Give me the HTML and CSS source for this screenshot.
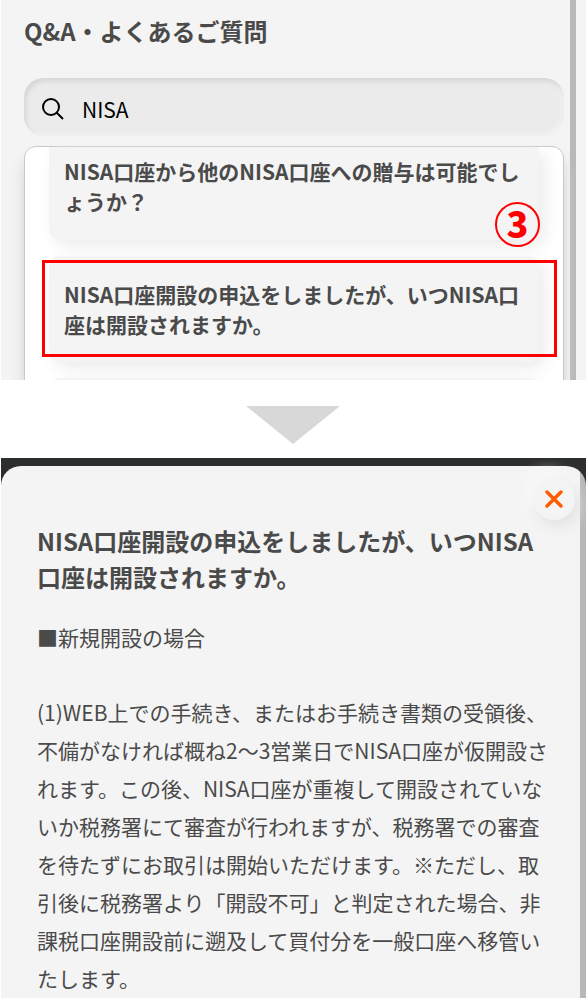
FILE: index.html
```html
<!DOCTYPE html>
<html lang="ja">
<head>
  <meta charset="utf-8">
  <title>Q&amp;A・よくあるご質問</title>
  <link rel="stylesheet" href="styles.css">
</head>
<body>
  <section class="search-screen">
    <div class="search-body">
      <h1>Q&amp;A・よくあるご質問</h1>
      <form class="search-box">
        <label for="keyword" aria-label="検索">
          <svg width="22" height="22" viewBox="0 0 22 22" fill="none" stroke="#000" stroke-width="2">
            <circle cx="9" cy="9" r="8"/>
            <path d="M14.5 14.5L21 21"/>
          </svg>
        </label>
        <input type="text" id="keyword" value="NISA">
      </form>
      <div class="results">
        <a class="result first" href="#">NISA口座から他のNISA口座への贈与は可能でしょうか？</a>
        <a class="result" href="#answer">NISA口座開設の申込をしましたが、いつNISA口座は開設されますか。</a>
        <div class="result"></div>
        <div class="highlight"></div>
        <span class="step">3</span>
      </div>
    </div>
    <div class="scrollbar"></div>
  </section>

  <svg class="arrow" width="94" height="38" viewBox="0 0 94 38">
    <path d="M0 0H94L47 38Z" fill="#d8d8d8"/>
  </svg>

  <section class="modal-screen">
    <article class="modal" id="answer">
      <button class="close" type="button" aria-label="閉じる">
        <svg width="18" height="18" viewBox="0 0 18 18" fill="none" stroke="#ff5a00" stroke-width="3.4" stroke-linecap="round">
          <path d="M2 2L16 16M16 2L2 16"/>
        </svg>
      </button>
      <h2>NISA口座開設の申込をしましたが、いつNISA口座は開設されますか。</h2>
      <p>■新規開設の場合</p>
      <p>(1)WEB上での手続き、またはお手続き書類の受領後、不備がなければ概ね2～3営業日でNISA口座が仮開設されます。この後、NISA口座が重複して開設されていないか税務署にて審査が行われますが、税務署での審査を待たずにお取引は開始いただけます。※ただし、取引後に税務署より「開設不可」と判定された場合、非課税口座開設前に遡及して買付分を一般口座へ移管いたします。</p>
    </article>
  </section>
</body>
</html>
```

FILE: styles.css
```css
* {
  box-sizing: border-box;
}

body {
  margin: 0;
  background: #fff;
  color: #4a4a4a;
  font-family: "Noto Sans CJK JP", sans-serif;
}

h1, h2, p {
  margin: 0;
}

/* search results */
.search-screen {
  display: flex;
  height: 380px;
  margin-left: 1px;
  overflow: hidden;
  background: #f4f4f4;
}

.search-body {
  flex: 1;
  padding: 13px 6px 0 23px;
}

.scrollbar {
  width: 6px;
  margin-right: 10px;
  background: #b8b8b8;
}

h1 {
  font-size: 24px;
  line-height: 36px;
}

.search-box {
  display: flex;
  align-items: center;
  gap: 18px;
  height: 58px;
  margin-top: 29px;
  padding: 4px 18px 0;
  border-radius: 20px;
  background: #ebebeb;
  box-shadow: inset 2px 3px 5px #d4d4d4, inset -2px -2px 4px #f5f5f5;
}

.search-box svg {
  display: block;
}

.search-box input {
  flex: 1;
  min-width: 0;
  padding: 0;
  border: 0;
  outline: 0;
  background: none;
  color: #000;
  font: 21px "Noto Sans CJK JP", sans-serif;
}

.results {
  position: relative;
  height: 300px;
  margin-top: 10px;
  padding: 0 24px;
  border: 1px solid #c8c8c8;
  border-radius: 12px;
  background: #fff;
  box-shadow: 0 12px 14px #d0d4d3;
}

.result {
  display: block;
  margin-bottom: 16px;
  padding: 23px 15px;
  border-radius: 10px;
  background: #f4f4f4;
  box-shadow: 6px 6px 16px #ececec;
  color: #4a4a4a;
  font-size: 21px;
  font-weight: bold;
  line-height: 30px;
  text-decoration: none;
}

.result.first {
  padding-top: 9px;
  padding-bottom: 24px;
  border-radius: 0 0 10px 10px;
}

.highlight {
  position: absolute;
  top: 113px;
  left: 17px;
  right: 6px;
  height: 97px;
  border: 3px solid #f00;
}

.step {
  position: absolute;
  top: 55px;
  right: 23px;
  width: 45px;
  height: 45px;
  border: 2px solid #f00;
  border-radius: 50%;
  color: #f00;
  font-size: 36px;
  font-weight: 900;
  line-height: 37px;
  text-align: center;
}

.arrow {
  display: block;
  margin: 26px auto 14px;
}

/* answer modal */
.modal-screen {
  margin-left: 1px;
  padding-top: 8px;
  background: #2d2f2e;
}

.modal {
  position: relative;
  padding: 57px 37px 1px 36px;
  border-radius: 20px 20px 0 0;
  background: linear-gradient(to left, #b8b8b8 6px, #f4f4f4 6px);
}

.close {
  position: absolute;
  top: 12px;
  right: 11px;
  display: flex;
  align-items: center;
  justify-content: center;
  width: 42px;
  height: 42px;
  padding: 0;
  border: 0;
  border-radius: 50%;
  background: #f4f4f4;
  box-shadow: 4px 6px 14px #e2e2e2, -6px -6px 14px #fafafa;
}

h2 {
  margin-bottom: 23px;
  font-size: 24px;
  line-height: 36px;
}

p {
  margin-bottom: 37px;
  font-size: 21px;
  line-height: 38px;
}

p:last-child {
  margin-bottom: 0;
}
```
